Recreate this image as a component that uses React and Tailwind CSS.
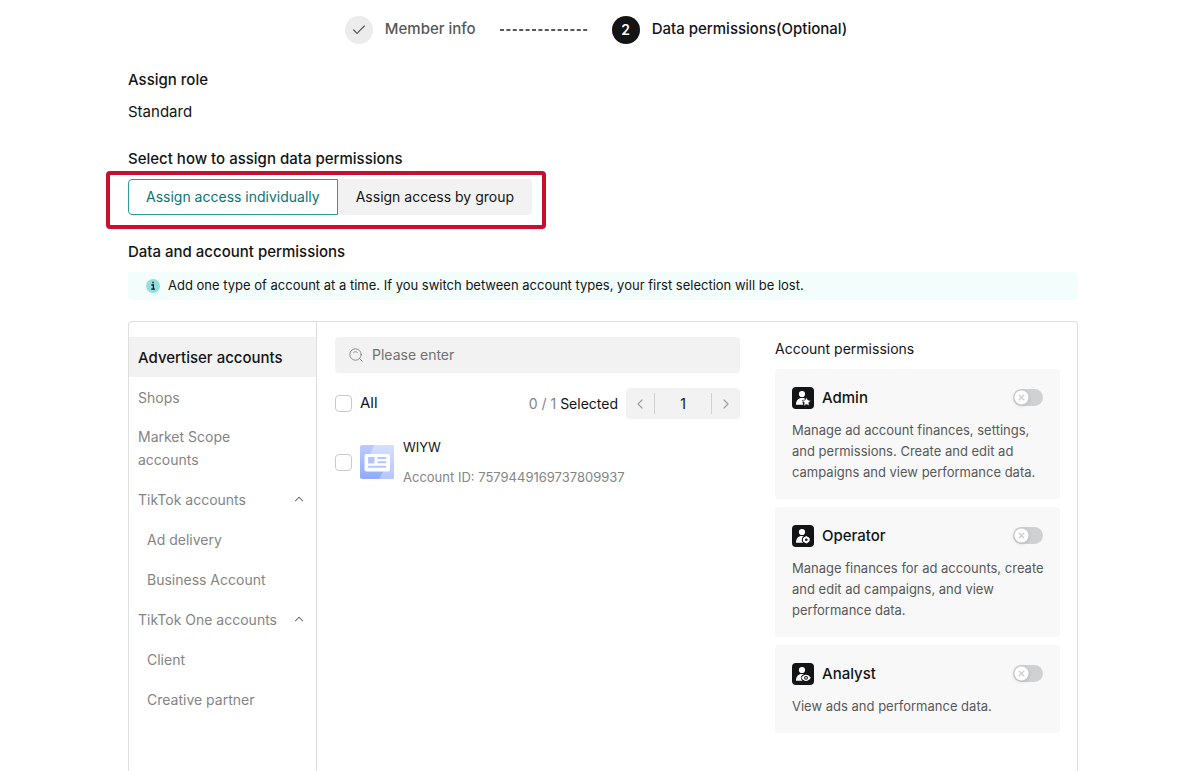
import { useState } from 'react'
import { Check, ChevronLeft, ChevronRight, ChevronUp } from 'lucide-react'

const navItems = [
  { label: 'Advertiser accounts' },
  { label: 'Shops' },
  { label: 'Market Scope accounts' },
  { label: 'TikTok accounts', group: true },
  { label: 'Ad delivery', child: true },
  { label: 'Business Account', child: true },
  { label: 'TikTok One accounts', group: true },
  { label: 'Client', child: true },
  { label: 'Creative partner', child: true },
]

const permissions = [
  {
    id: 'admin',
    name: 'Admin',
    description:
      'Manage ad account finances, settings, and permissions. Create and edit ad campaigns and view performance data.',
  },
  {
    id: 'operator',
    name: 'Operator',
    description: 'Manage finances for ad accounts, create and edit ad campaigns, and view performance data.',
  },
  { id: 'analyst', name: 'Analyst', description: 'View ads and performance data.' },
]

const RoleIcon = ({ role }) => (
  <svg viewBox="0 0 22 22" className="h-[22px] w-[22px] shrink-0" aria-hidden="true">
    <rect width="22" height="22" rx="4" fill="#121415" />
    <circle cx="10" cy="7" r="3.1" fill="#fff" />
    <path d="M4 17.8c0-4.2 2.3-6.8 6-6.8 1.6 0 2.8.4 3.8 1.2l-3.4 3 1 2.6z" fill="#fff" />
    {role === 'admin' && (
      <path
        d="m14.5 10.3 1.4 2.7 3 .5-2.1 2.2.4 3-2.7-1.3-2.7 1.3.4-3-2.1-2.2 3-.5z"
        fill="#fff"
        stroke="#121415"
        strokeWidth="0.6"
      />
    )}
    {role === 'operator' && (
      <>
        <circle cx="14.3" cy="14.8" r="4.5" fill="#121415" />
        <path d="m14.3 11.6 2.8 1.6v3.2L14.3 18l-2.8-1.6v-3.2z" fill="#fff" stroke="#fff" strokeLinejoin="round" />
        <circle cx="14.3" cy="14.8" r="1.3" fill="#121415" />
      </>
    )}
    {role === 'analyst' && (
      <>
        <ellipse cx="14" cy="14.8" rx="5.2" ry="4.1" fill="#121415" />
        <path d="M9.3 14.8c2.4-4.2 7-4.2 9.4 0-2.4 4.2-7 4.2-9.4 0z" fill="#fff" />
        <circle cx="14" cy="14.8" r="1.9" fill="#121415" />
        <circle cx="14" cy="14.8" r="0.9" fill="#fff" />
      </>
    )}
  </svg>
)

const SearchIcon = () => (
  <svg viewBox="0 0 14 14" className="h-3.5 w-3.5 shrink-0" fill="none" stroke="#8a8b8c" strokeLinecap="round" aria-hidden="true">
    <circle cx="6.5" cy="6.5" r="5.7" />
    <path d="m10.7 10.7 2.4 2.4M4.6 4.4c1-1 2.8-1 3.8 0" />
  </svg>
)

const AccountIcon = () => (
  <svg viewBox="0 0 34 34" className="h-[34px] w-[34px] shrink-0" aria-hidden="true">
    <defs>
      <linearGradient id="account-base" x1="0" y1="0" x2="0" y2="1">
        <stop offset="0" stopColor="#bccbff" />
        <stop offset="1" stopColor="#8fabff" />
      </linearGradient>
      <linearGradient id="account-shine" x1="0" y1="0" x2="0" y2="1">
        <stop offset="0" stopColor="#d7e0ff" />
        <stop offset="1" stopColor="#b5c6ff" />
      </linearGradient>
    </defs>
    <rect width="34" height="34" rx="2" fill="url(#account-base)" />
    <path d="M14.5 0H32a2 2 0 0 1 2 2v30a2 2 0 0 1-2 2H19l5-9L10 9z" fill="url(#account-shine)" />
    <rect x="4.5" y="9" width="25.5" height="17.5" rx="2" fill="#fff" />
    <rect x="8" y="12" width="6.5" height="6.5" rx="0.5" fill="#b4c6ff" />
    <path d="M17.5 13h8.7M17.5 17.3h8.7M8 21.7h18.2" stroke="#b4c6ff" strokeWidth="2" />
  </svg>
)

const Checkbox = ({ id, label }) => (
  <input
    id={id}
    type="checkbox"
    aria-label={label}
    className="h-[17px] w-[17px] shrink-0 appearance-none rounded-[4px] border border-[#c9cacb] bg-white checked:border-[#009995] checked:bg-[#009995]"
  />
)

const PermissionCard = ({ id, name, description }) => (
  <div className="rounded bg-[#f8f8f8] pt-[18px] pr-2 pb-4 pl-[17px]">
    <div className="flex items-center pr-[9px]">
      <RoleIcon role={id} />
      <label htmlFor={id} className="ml-2 flex-1 text-[15px] leading-[22px] font-medium text-[#121415]">
        {name}
      </label>
      <span className="relative flex h-[18px] w-[30px]">
        <input
          id={id}
          type="checkbox"
          role="switch"
          className="h-[17px] w-[30px] appearance-none rounded-full bg-[#d0d1d2] checked:bg-[#009995]"
        />
        <svg viewBox="0 0 17 17" className="pointer-events-none absolute top-0 left-0 h-[17px] w-[17px] drop-shadow-sm" aria-hidden="true">
          <circle cx="8.5" cy="8.5" r="7" fill="#fff" />
          <path d="m5.8 5.8 5.4 5.4m0-5.4-5.4 5.4" stroke="#cfd0d1" strokeWidth="1.4" />
        </svg>
      </span>
    </div>
    <p className="mt-[11px] text-[13px] leading-[21px] text-[#57595a]">{description}</p>
  </div>
)

export default function App() {
  const [mode, setMode] = useState('individual')
  const [active, setActive] = useState('Advertiser accounts')

  const modeClass = (value) =>
    mode === value
      ? 'border-[#2a9d94] bg-white text-[#0b7571]'
      : 'border-transparent bg-[#f2f2f2] text-[#121415]'

  return (
    <main className="flex min-h-screen flex-col bg-white pr-[122px] pl-32 font-['Inter','Liberation_Sans',sans-serif] text-[15px] text-[#121415]">
      <ol className="flex h-[59px] items-center justify-center pr-3.5 font-medium">
        <li className="flex items-center text-[#57595a]">
          <span className="mr-3 flex h-7 w-7 items-center justify-center rounded-full bg-[#ececec]">
            <Check className="h-4 w-4" strokeWidth={1.8} />
          </span>
          Member info
        </li>
        <li aria-hidden="true" className="mx-6 flex">
          <svg viewBox="0 0 88 2" className="h-0.5 w-[88px]">
            <path d="M0 1h88" stroke="#57595a" strokeWidth="2" strokeDasharray="4 2.4" />
          </svg>
        </li>
        <li className="flex items-center" aria-current="step">
          <span className="mr-3 flex h-7 w-7 items-center justify-center rounded-full bg-[#121415] text-sm font-semibold text-white">
            2
          </span>
          Data permissions(Optional)
        </li>
      </ol>

      <h2 className="mt-2.5 leading-[22px] font-medium">Assign role</h2>
      <p className="mt-2.5 leading-[22px]">Standard</p>

      <h2 className="mt-[25px] leading-[22px] font-medium">Select how to assign data permissions</h2>
      <div className="relative mt-[9px] flex self-start text-sm">
        <button
          type="button"
          onClick={() => setMode('individual')}
          className={`h-9 rounded-l border px-[17px] ${modeClass('individual')}`}
        >
          Assign access individually
        </button>
        <button
          type="button"
          onClick={() => setMode('group')}
          className={`h-9 rounded-r border px-[17px] ${modeClass('group')}`}
        >
          Assign access by group
        </button>
        <div className="pointer-events-none absolute -top-2 -right-3.5 -bottom-3.5 -left-[22px] rounded border-4 border-[#c8102e]" />
      </div>

      <h2 className="mt-[26px] leading-[22px] font-medium">Data and account permissions</h2>
      <div className="mt-[9px] flex h-7 items-center rounded bg-[#f2fdfc] px-[18px] text-[13px]">
        <svg viewBox="0 0 14 14" className="mr-2 h-3.5 w-3.5" aria-hidden="true">
          <circle cx="7" cy="7" r="7" fill="#93dfdb" />
          <path d="M5.4 6h2v4M5.2 10.1h3.8M6.3 3.5h1.4" stroke="#121415" strokeWidth="1.3" fill="none" />
        </svg>
        Add one type of account at a time. If you switch between account types, your first selection will be lost.
      </div>

      <section className="mt-[21px] flex flex-1 rounded-t border border-b-0 border-[#dedfdf]">
        <nav className="w-[188px] shrink-0 border-r border-[#dedfdf] pt-[15px] text-sm">
          {navItems.map(({ label, group, child }) => (
            <button
              key={label}
              type="button"
              onClick={() => setActive(label)}
              className={`flex min-h-10 w-full items-center justify-between py-2 pr-2.5 text-left leading-[23px] ${child ? 'pl-[18px]' : 'pl-[9px]'} ${
                active === label ? 'bg-[#f2f2f2] text-[15px] font-medium text-[#121415]' : 'text-[#848586]'
              }`}
            >
              <span className={group ? '' : 'max-w-[145px]'}>{label}</span>
              {group && <ChevronUp className="h-3.5 w-3.5 shrink-0 text-[#57595a]" strokeWidth={1.8} />}
            </button>
          ))}
        </nav>

        <div className="min-w-0 flex-1 pt-[15px] pl-[18px]">
          <div className="flex h-9 items-center rounded bg-[#f2f2f2] px-3.5 text-sm">
            <SearchIcon />
            <input
              type="text"
              aria-label="Search accounts"
              placeholder="Please enter"
              className="ml-[9px] min-w-0 flex-1 bg-transparent outline-none placeholder:text-[#707172]"
            />
          </div>

          <div className="mt-[15px] flex h-[31px] items-center">
            <Checkbox id="all" />
            <label htmlFor="all" className="ml-2">All</label>
            <span className="ml-auto text-sm">
              <span className="text-[#848586]">0 / 1</span> Selected
            </span>
            <div className="ml-2 flex h-[31px] w-[114px] items-center rounded bg-[#f2f2f2]">
              <button type="button" aria-label="Previous page" className="flex w-7 justify-center text-[#a0a1a2]">
                <ChevronLeft className="h-4 w-4" strokeWidth={1.8} />
              </button>
              <input
                type="text"
                aria-label="Page"
                defaultValue="1"
                className="h-[21px] min-w-0 flex-1 border-x border-[#d0d1d2] bg-transparent text-center text-sm outline-none"
              />
              <button type="button" aria-label="Next page" className="flex w-7 justify-center text-[#a0a1a2]">
                <ChevronRight className="h-4 w-4" strokeWidth={1.8} />
              </button>
            </div>
          </div>

          <div className="mt-[17px] flex items-center">
            <Checkbox id="account" label="WIYW" />
            <span className="ml-2"><AccountIcon /></span>
            <div className="ml-[9px] text-[13px]">
              <p className="leading-[22px]">WIYW</p>
              <p className="mt-2 leading-[22px] text-[#848586]">Account ID: 7579449169737809937</p>
            </div>
          </div>
        </div>

        <aside className="mr-[17px] ml-[35px] w-[285px] shrink-0 pt-4">
          <h3 className="text-sm leading-[22px]">Account permissions</h3>
          <div className="mt-[9px] flex flex-col gap-2">
            {permissions.map((item) => (
              <PermissionCard key={item.id} {...item} />
            ))}
          </div>
        </aside>
      </section>
    </main>
  )
}
